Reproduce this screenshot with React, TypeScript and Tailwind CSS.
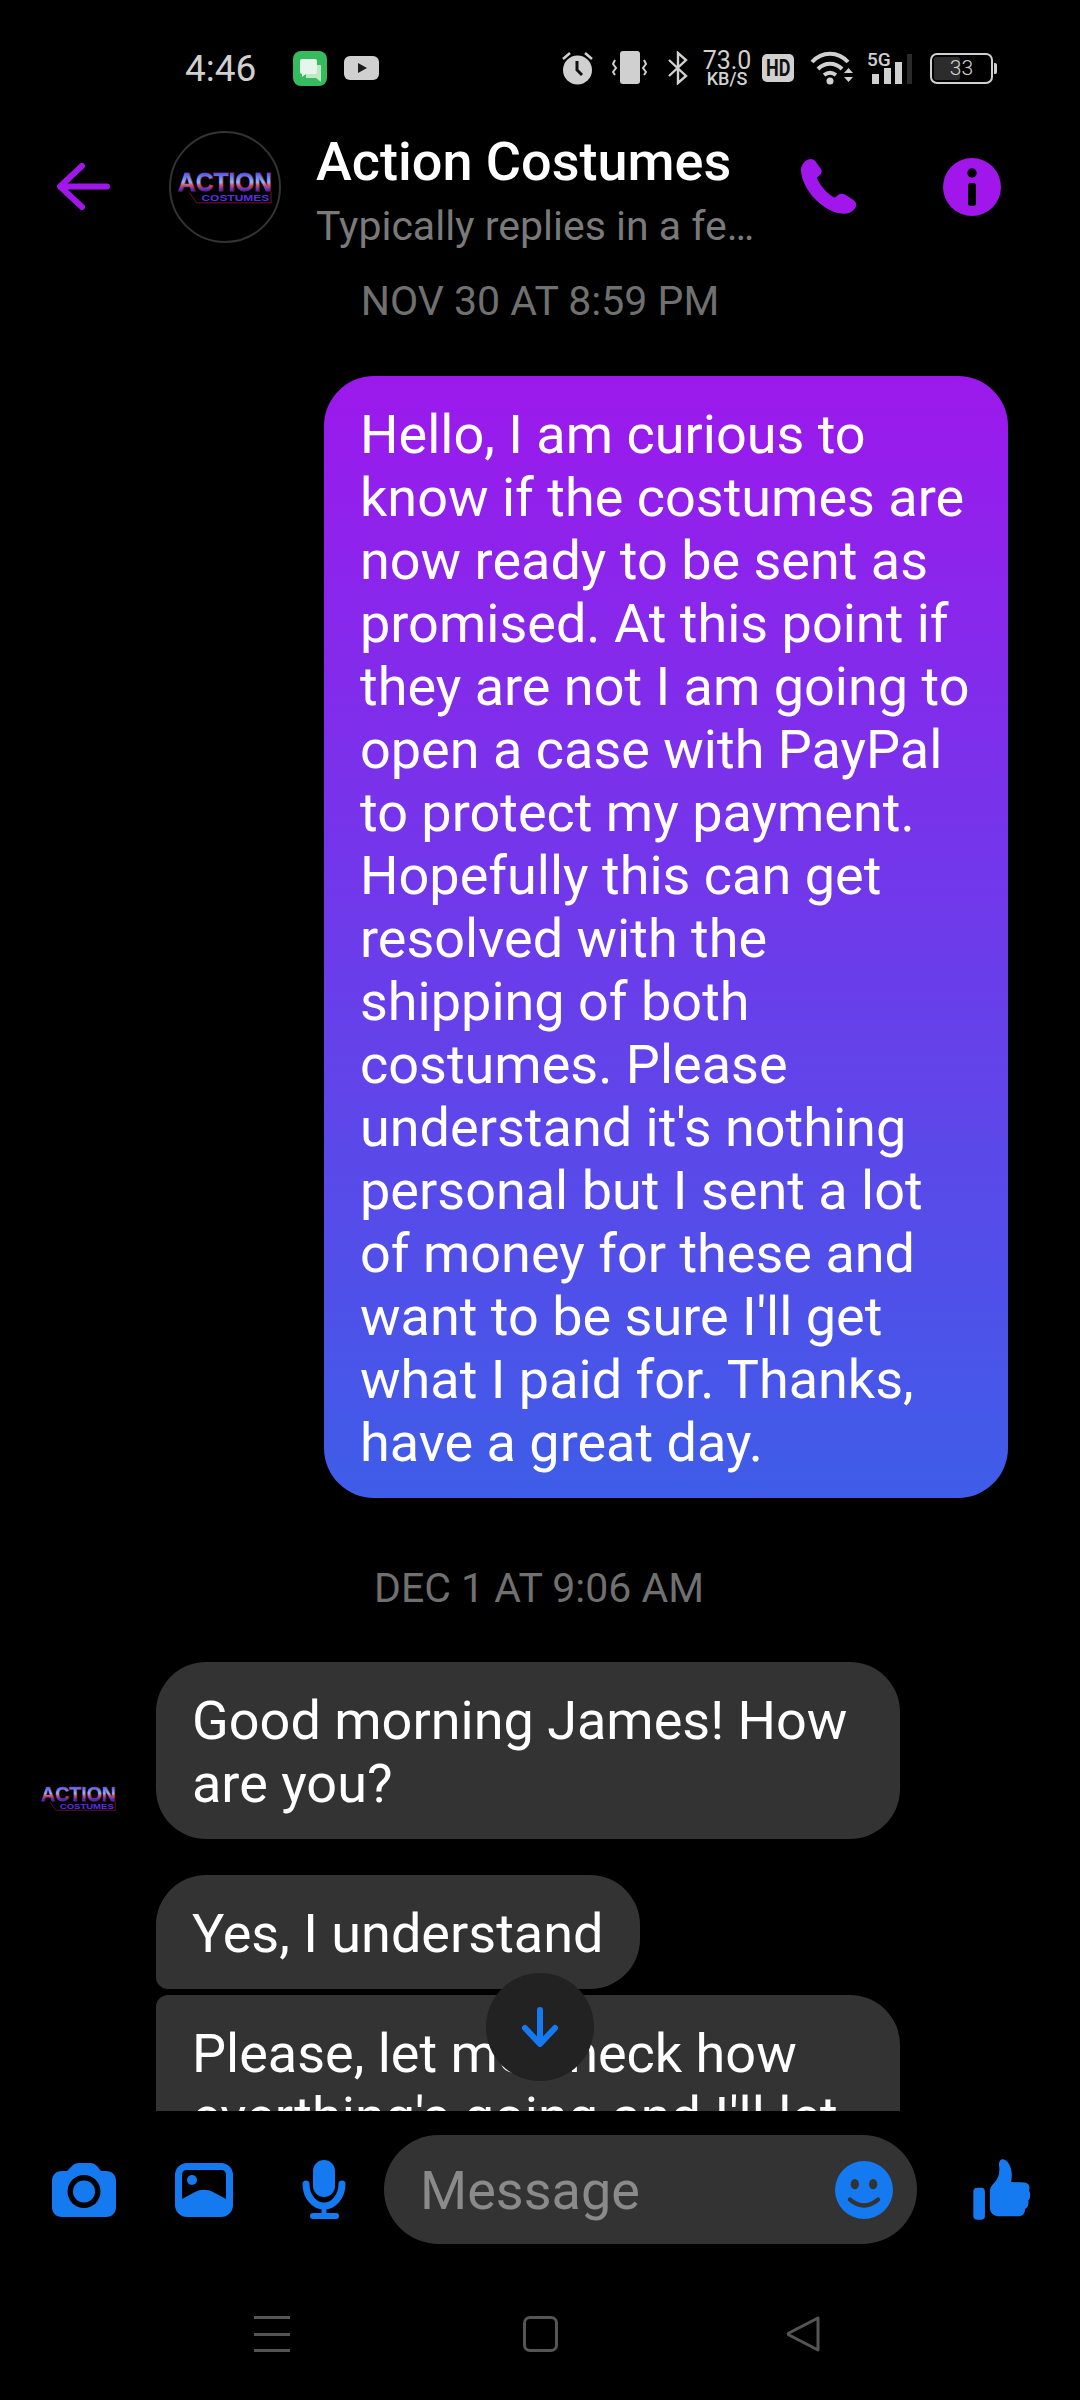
const outgoing = [
  "Hello, I am curious to",
  "know if the costumes are",
  "now ready to be sent as",
  "promised. At this point if",
  "they are not I am going to",
  "open a case with PayPal",
  "to protect my payment.",
  "Hopefully this can get",
  "resolved with the",
  "shipping of both",
  "costumes. Please",
  "understand it's nothing",
  "personal but I sent a lot",
  "of money for these and",
  "want to be sure I'll get",
  "what I paid for. Thanks,",
  "have a great day.",
];

function Logo({ width, id }: { width: number; id: string }) {
  return (
    <svg width={width} viewBox="0 0 100 36" className="block overflow-visible">
      <defs>
        <linearGradient id={id} x1="0" y1="0" x2="0" y2="1">
          <stop offset="0.12" stopColor="#3a35e8" />
          <stop offset="0.52" stopColor="#86bcfa" />
          <stop offset="0.62" stopColor="#d8506e" />
          <stop offset="0.78" stopColor="#3a2fd0" />
        </linearGradient>
      </defs>
      <path d="M12 24l8 11h79V23" fill="none" stroke="#9a1a3a" strokeWidth="0.8" />
      <text
        x="50"
        y="22"
        textAnchor="middle"
        fontFamily="'Liberation Sans', sans-serif"
        fontWeight="700"
        fontSize="28"
        textLength="100"
        lengthAdjust="spacingAndGlyphs"
        fill={`url(#${id})`}
        stroke="#9a1a3a"
        strokeWidth="1"
        paintOrder="stroke"
      >
        ACTION
      </text>
      <text
        x="61"
        y="33.500"
        textAnchor="middle"
        fontFamily="'Liberation Sans', sans-serif"
        fontWeight="700"
        fontSize="10.500"
        textLength="72"
        lengthAdjust="spacingAndGlyphs"
        fill="#5a2fe0"
      >
        COSTUMES
      </text>
    </svg>
  );
}

function StatusBar() {
  return (
    <div className="flex h-[124px] shrink-0 items-center pl-[185px] pr-[83px] pt-[12px] text-[#d0d0d0]">
      <span className="w-[72px] text-[37px] leading-none">4:46</span>
      <svg width="34" height="35" viewBox="0 0 34 35" className="ml-[36px]">
        <rect width="34" height="35" rx="8" fill="#36bb5e" />
        <path d="M13 14h14a1 1 0 0 1 1 1v16l-5-4H13z" fill="#bfe8c9" />
        <path d="M9 8h13a2 2 0 0 1 2 2v11a2 2 0 0 1-2 2H13l-4 3V23a2 2 0 0 1-2-2V10a2 2 0 0 1 2-2z" fill="#e6f6ea" />
      </svg>
      <svg width="35" height="24" viewBox="0 0 35 24" className="ml-[17px]">
        <rect width="35" height="24" rx="6" fill="#d0d0d0" />
        <path d="M14 7l9 5-9 5z" fill="#1c1c1c" />
      </svg>
      <div className="ml-auto flex items-center">
        <svg width="31" height="33" viewBox="0 0 31 33">
          <circle cx="15.500" cy="18" r="14.500" fill="#d0d0d0" />
          <path d="M15 9v9l5 5" fill="none" stroke="#111" strokeWidth="3" />
          <path d="M1 7l7-6M30 7l-7-6" stroke="#d0d0d0" strokeWidth="2.500" />
        </svg>
        <svg width="35" height="34" viewBox="0 0 35 34" className="ml-[19px]">
          <rect x="8" y="0" width="20" height="33" rx="3" fill="#d0d0d0" />
          <path d="M3 9l-2 4 3 4-3 4 2 3M32 9l2 4-3 4 3 4-2 3" fill="none" stroke="#d0d0d0" strokeWidth="2" />
        </svg>
        <svg width="20" height="34" viewBox="0 0 20 34" className="ml-[21px]">
          <path d="M1 9l17 16-8 7V2l8 7L1 25" fill="none" stroke="#d0d0d0" strokeWidth="2.400" />
        </svg>
        <div className="ml-[15px] flex w-[48px] flex-col items-center text-[#d0d0d0]">
          <span className="text-[25px] leading-[21px]">73.0</span>
          <span className="text-[18px] font-medium leading-[15px]">KB/S</span>
        </div>
        <div className="ml-[11px] flex h-[28px] w-[32px] items-center justify-center rounded-[5px] bg-[#d0d0d0] text-[#111]">
          <span className="scale-x-[0.75] text-[24px] font-bold leading-none">HD</span>
        </div>
        <svg width="44" height="34" viewBox="0 0 44 34" className="ml-[16px]">
          <path d="M2 11C12 0 28 0 38 11M8 18c7-7 17-7 24 0M14 24c4-3 8-3 12 0" fill="none" stroke="#d0d0d0" strokeWidth="4" />
          <circle cx="20" cy="30" r="3.500" fill="#d0d0d0" />
          <path d="M34 22l4.500-5 4.500 5zM34 26h9l-4.500 5z" fill="#d0d0d0" />
        </svg>
        <div className="relative ml-[13px] flex h-[32px] w-[46px] items-end gap-[4.500px] pl-[5px]">
          <span className="absolute -top-[2px] left-0 text-[19px] font-medium leading-none">5G</span>
          <span className="h-[10px] w-[7px] bg-[#d0d0d0]" />
          <span className="h-[16px] w-[7px] bg-[#d0d0d0]" />
          <span className="h-[22px] w-[7px] bg-[#d0d0d0]" />
          <span className="h-[30px] w-[5px] bg-[#2a2a2a]" />
        </div>
        <div className="ml-[17px] flex items-center">
          <div className="relative flex h-[31px] w-[63px] items-center justify-center rounded-[7px] border-2 border-[#d0d0d0]">
            <span className="absolute bottom-[2px] left-[2px] top-[2px] w-[26px] rounded-[2px] bg-[#2c2c2c]" />
            <span className="relative text-[21px] font-light leading-none">33</span>
          </div>
          <span className="ml-[1px] h-[11px] w-[3px] rounded-r-[2px] bg-[#d0d0d0]" />
        </div>
      </div>
    </div>
  );
}

function Header() {
  return (
    <div className="flex h-[152px] shrink-0 items-start">
      <svg width="53" height="47" viewBox="0 0 53 47" className="ml-[57px] mt-[39px]">
        <path d="M25 3L3 23.500l22 20.500M4 23.500h46" fill="none" stroke="#a116ea" strokeWidth="6" strokeLinecap="round" strokeLinejoin="round" />
      </svg>
      <div className="ml-[59px] mt-[7px] flex h-[112px] w-[112px] items-center justify-center rounded-full border-2 border-[#333]">
        <Logo width={94} id="logoBig" />
      </div>
      <div className="ml-[35px] mt-[8px] w-[484px]">
        <div className="text-[54px] font-medium leading-[60px] text-white">Action Costumes</div>
        <div className="mt-[10px] text-[41px] leading-[48px] text-[#7a7a7a]">Typically replies in a fe…</div>
      </div>
      <svg width="58" height="58" viewBox="57 55 175 175" className="mt-[34px]">
        <path
          d="M80 60C90 55 100 60 105 67L120 88C125 95 122 102 116 107L108 115C118 140 140 162 162 175L172 167C178 162 186 161 194 166L218 182C228 190 230 200 222 208C210 222 195 226 175 222C120 210 65 150 60 95C59 80 66 68 80 60Z"
          fill="#a116ea"
        />
      </svg>
      <svg width="58" height="58" viewBox="0 0 58 58" className="ml-[85px] mt-[34px]">
        <circle cx="29" cy="29" r="29" fill="#a116ea" />
        <circle cx="29" cy="15" r="4.700" fill="#000" />
        <rect x="25" y="25" width="8" height="23" rx="3" fill="#000" />
      </svg>
    </div>
  );
}

function Composer() {
  return (
    <div className="mt-[24px] flex h-[109px] shrink-0 items-center">
      <svg width="64" height="54" viewBox="0 0 64 54" className="ml-[52px]">
        <path d="M20 3C22 1 24 0 27 0H38C41 0 43 1 45 3L49 8H54C60 8 64 12 64 18V44C64 50 60 54 54 54H10C4 54 0 50 0 44V18C0 12 4 8 10 8H15Z" fill="#157aef" />
        <circle cx="32" cy="28.500" r="16.500" fill="#000" />
        <circle cx="32" cy="28.500" r="11" fill="#157aef" />
      </svg>
      <svg width="58" height="54" viewBox="0 0 58 54" className="ml-[59px]">
        <rect width="58" height="54" rx="12" fill="#157aef" />
        <path d="M7 12Q7 7 12 7H46Q51 7 51 12V36L38 29C32 26 26 26 20 29L7 36Z" fill="#000" />
        <circle cx="17" cy="17" r="5" fill="#157aef" />
      </svg>
      <svg width="44" height="59" viewBox="0 0 44 59" className="ml-[69px]">
        <rect x="11" y="0" width="22" height="37" rx="11" fill="#157aef" />
        <path d="M4 24C4 36 12 46 22 46S40 36 40 24" fill="none" stroke="#157aef" strokeWidth="7" strokeLinecap="round" />
        <rect x="19.500" y="46" width="5" height="9" fill="#157aef" />
        <rect x="8" y="53" width="29" height="6" rx="3" fill="#157aef" />
      </svg>
      <div className="ml-[38px] flex h-[109px] w-[533px] items-center rounded-full bg-[#333333] pl-[36px] pr-[24px]">
        <span className="pt-[3px] text-[54px] leading-none text-[#8a8a8a]">Message</span>
        <svg width="58" height="58" viewBox="0 0 60 60" className="ml-auto">
          <circle cx="30" cy="30" r="30" fill="#157aef" />
          <ellipse cx="20.500" cy="24" rx="4.300" ry="5.300" fill="#333" />
          <ellipse cx="39.500" cy="24" rx="4.300" ry="5.300" fill="#333" />
          <path d="M15.500 40Q30 52 44.500 40" fill="none" stroke="#333" strokeWidth="4.500" strokeLinecap="round" />
        </svg>
      </div>
      <svg width="58" height="61" viewBox="460 25 173 184" className="ml-[56px]">
        <rect x="460" y="112" width="35" height="96" rx="12" fill="#157aef" />
        <path
          d="M540 30C548 20 565 28 572 50C578 70 576 82 574 94L615 96C628 98 632 108 628 120C634 130 632 145 626 150C628 162 624 172 616 176C616 190 608 198 596 198L540 198C522 198 510 188 510 172L510 122C510 112 516 104 524 96C536 84 540 68 538 48C537 40 537 34 540 30Z"
          fill="#157aef"
        />
      </svg>
    </div>
  );
}

function NavBar() {
  return (
    <div className="flex h-[156px] shrink-0 items-start pt-[72px]">
      <div className="ml-[254px] flex h-[36px] w-[36px] flex-col justify-between">
        <span className="h-[3px] bg-[#555]" />
        <span className="h-[3px] bg-[#555]" />
        <span className="h-[3px] bg-[#555]" />
      </div>
      <div className="ml-[233px] h-[36px] w-[35px] rounded-[7px] border-[3px] border-[#555]" />
      <svg width="34" height="36" viewBox="0 0 34 36" className="ml-[228px]">
        <path d="M32 2v32L3 19c-1-.600-1-1.400 0-2z" fill="none" stroke="#555" strokeWidth="3" strokeLinejoin="round" />
      </svg>
    </div>
  );
}

export default function App() {
  return (
    <div className="flex h-[2400px] w-[1080px] flex-col overflow-hidden bg-black font-['Roboto',sans-serif]">
      <StatusBar />
      <Header />
      <div className="relative h-[1835px] shrink-0 overflow-hidden">
        <div className="text-center text-[41px] leading-[50px] text-[#707070]">NOV 30 AT 8:59 PM</div>
        <div className="ml-[324px] mt-[50px] w-[684px] rounded-[50px] bg-[linear-gradient(180deg,#9c19ec_0%,#3e5de8_100%)] pb-[24px] pl-[36px] pr-[20px] pt-[27px] text-[54px] leading-[63px] text-white">
          {outgoing.map((line) => (
            <div key={line} className="whitespace-nowrap">
              {line}
            </div>
          ))}
        </div>
        <div className="mt-[65px] pr-[2px] text-center text-[41px] leading-[50px] text-[#707070]">DEC 1 AT 9:06 AM</div>
        <div className="relative ml-[156px] mt-[49px] flex w-[744px] flex-col text-[54px] leading-[63px] text-white">
          <div className="absolute -left-[115px] top-[122px]">
            <Logo width={75} id="logoSmall" />
          </div>
          <div className="rounded-[50px] bg-[#333333] px-[36px] pb-[24px] pt-[27px]">
            Good morning James! How are you?
          </div>
          <div className="mt-[36px] w-fit rounded-[50px] rounded-bl-[12px] bg-[#333333] px-[36px] pb-[24px] pt-[27px]">
            Yes, I understand
          </div>
          <div className="mt-[6px] rounded-[50px] rounded-tl-[12px] bg-[#333333] px-[36px] pb-[24px] pt-[27px]">
            Please, let me check how everthing's going and I'll let you know
          </div>
        </div>
        <div className="absolute left-[486px] top-[1697px] flex h-[108px] w-[108px] items-center justify-center rounded-full bg-[#222222]">
          <svg width="38" height="40" viewBox="0 0 38 40">
            <path d="M19 3V36M4 21L19 37L34 21" fill="none" stroke="#157aef" strokeWidth="6" strokeLinecap="round" strokeLinejoin="round" />
          </svg>
        </div>
      </div>
      <Composer />
      <NavBar />
    </div>
  );
}
